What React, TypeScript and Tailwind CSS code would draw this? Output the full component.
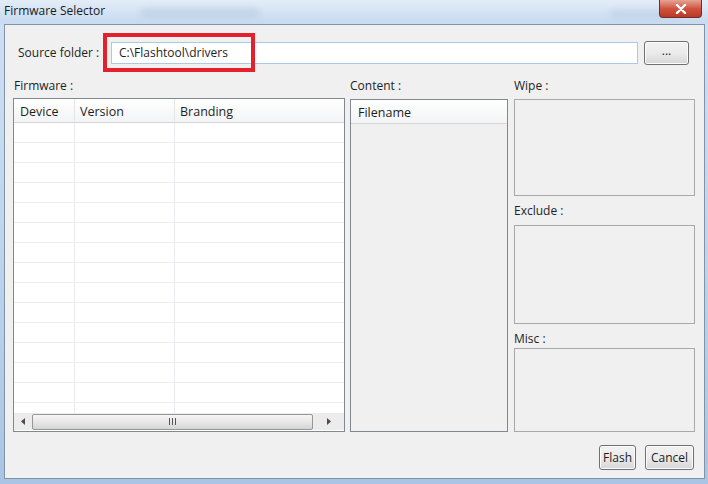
import React from "react";

const font = { fontFamily: '"Open Sans", "Noto Sans", sans-serif' };

function Label({ children, className = "" }: { children: React.ReactNode; className?: string }) {
  return <div className={`text-[12px] leading-[16px] text-[#1e1e1e] ${className}`}>{children}</div>;
}

function Btn({ children, className = "" }: { children: React.ReactNode; className?: string }) {
  return (
    <div
      className={`flex items-center justify-center rounded-[3px] border border-[#707070] bg-gradient-to-b from-[#f2f2f2] via-[#ebebeb] to-[#d6d6d6] text-[12px] text-[#1e1e1e] shadow-[inset_0_0_0_1px_#fcfcfc] ${className}`}
    >
      {children}
    </div>
  );
}

export default function App() {
  const rows = Array.from({ length: 15 });
  return (
    <div style={font} className="w-[708px] h-[484px] overflow-hidden bg-gradient-to-b from-[#cfe0f3] via-[#bfd5ee] to-[#a9c4e4] flex flex-col relative">
      {/* title bar */}
      <div className="h-[22px] relative flex items-center px-[4px] bg-gradient-to-b from-[#e3edf8] to-[#c8dbf0]">
        <span className="text-[12px] text-[#1a1a1a] leading-none">Firmware Selector</span>
        <div className="absolute left-[140px] top-[8px] w-[120px] h-[10px] rounded-full bg-[#9fb4cc] opacity-30 blur-[3px]" />
        <div className="absolute right-[28px] top-[10px] w-[70px] h-[8px] rounded-full bg-[#b0c2d8] opacity-40 blur-[3px]" />
        <div className="absolute right-[6px] top-0 w-[43px] h-[18px] rounded-b-[4px] border border-t-0 border-[#7a2a22] bg-gradient-to-b from-[#e6a394] via-[#d0533f] to-[#b83a27] flex items-center justify-center">
          <svg width="12" height="10" viewBox="0 0 12 10">
            <path d="M2 1 L10 9 M10 1 L2 9" stroke="#ffffff" strokeWidth="2.4" strokeLinecap="round" />
          </svg>
        </div>
      </div>
      <div className="h-[2px] bg-[#c8dbf0]" />

      {/* client area */}
      <div className="ml-[4px] mr-[3px] h-[455px] border border-[#8293a8] bg-[#f0f0f0] flex flex-col relative">
        {/* source row */}
        <div className="mt-[16px] h-[23px] flex items-center">
          <Label className="ml-[13px] w-[93px]">Source folder :</Label>
          <div className="w-[527px] h-[22px] border border-[#abc8e6] bg-white flex items-center pl-[7px] text-[12px] text-[#1e1e1e]">
            C:\Flashtool\drivers
          </div>
          <Btn className="ml-[6px] w-[45px] h-[24px] pb-[4px]">...</Btn>
        </div>

        {/* main columns */}
        <div className="mt-[14px] h-[354px] flex ml-[8px]">
          {/* Firmware */}
          <div className="w-[332px] flex flex-col">
            <Label className="ml-[1px] h-[20px]">Firmware :</Label>
            <div className="flex-1 border border-[#828790] bg-white flex flex-col overflow-hidden">
              <div className="h-[24px] flex border-b border-[#d5d5d5] bg-gradient-to-b from-white to-[#f3f4f6] text-[12.5px] text-[#1e1e1e]">
                <div className="w-[61px] pl-[6px] pt-[3px] flex items-center border-r border-[#e5e5e5]">Device</div>
                <div className="w-[100px] pl-[5px] pt-[3px] flex items-center border-r border-[#e5e5e5]">Version</div>
                <div className="flex-1 pl-[5px] pt-[3px] flex items-center">Branding</div>
              </div>
              <div className="flex-1 overflow-hidden">
                {rows.map((_, i) => (
                  <div key={i} className="h-[20px] flex border-b border-[#ededed]">
                    <div className="w-[61px] border-r border-[#e8eaf0]" />
                    <div className="w-[100px] border-r border-[#e8eaf0]" />
                    <div className="flex-1" />
                  </div>
                ))}
              </div>
              {/* scrollbar */}
              <div className="h-[17px] mb-[1px] flex items-center bg-[#ececec]">
                <div className="w-[18px] flex items-center justify-center">
                  <svg width="5" height="7" viewBox="0 0 5 7"><path d="M4 0 L0 3.5 L4 7 Z" fill="#4d4d4d" /></svg>
                </div>
                <div className="w-[281px] h-[16px] rounded-[2px] border border-[#979797] bg-gradient-to-b from-[#f5f5f5] via-[#e8e8e8] to-[#d4d4d4] flex items-center justify-center">
                  <svg width="7" height="7" viewBox="0 0 7 7">
                    <path d="M0.5 0 V7 M3.5 0 V7 M6.5 0 V7" stroke="#555" strokeWidth="1" />
                  </svg>
                </div>
                <div className="flex-1 flex items-center justify-center">
                  <svg width="5" height="7" viewBox="0 0 5 7"><path d="M1 0 L5 3.5 L1 7 Z" fill="#4d4d4d" /></svg>
                </div>
              </div>
            </div>
          </div>

          {/* Content */}
          <div className="ml-[5px] w-[158px] flex flex-col">
            <Label className="h-[21px]">Content :</Label>
            <div className="flex-1 border border-[#828790] bg-[#f0f0f0] flex flex-col">
              <div className="h-[24px] flex items-center pl-[7px] pt-[3px] border-b border-[#d5d5d5] bg-gradient-to-b from-white to-[#f3f4f6] text-[12.5px] text-[#1e1e1e]">
                Filename
              </div>
            </div>
          </div>

          {/* Right */}
          <div className="ml-[6px] w-[181px] flex flex-col">
            <Label className="h-[21px]">Wipe :</Label>
            <div className="h-[98px] border border-[#a9a9a9] bg-[#f0f0f0]" />
            <Label className="mt-[7px] h-[22px]">Exclude :</Label>
            <div className="h-[99px] border border-[#a9a9a9] bg-[#f0f0f0]" />
            <Label className="mt-[7px] h-[18px]">Misc :</Label>
            <div className="h-[84px] border border-[#a9a9a9] bg-[#f0f0f0]" />
          </div>
        </div>

        {/* buttons */}
        <div className="mt-[13px] h-[25px] flex justify-end mr-[10px] gap-[9px]">
          <Btn className="w-[37px]">Flash</Btn>
          <Btn className="w-[49px]">Cancel</Btn>
        </div>

        {/* red annotation */}
        <div className="absolute left-[98px] top-[8px] w-[152px] h-[39px] border-[4px] border-[#e3202b] pointer-events-none" />
      </div>
    </div>
  );
}
